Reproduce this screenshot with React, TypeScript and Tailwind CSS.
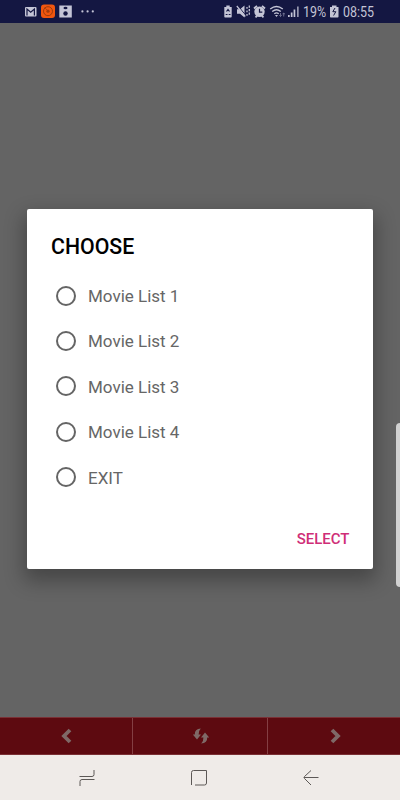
import React, { useState } from 'react';

const options = ['Movie List 1', 'Movie List 2', 'Movie List 3', 'Movie List 4', 'EXIT'];

const StatusBar = () => {
  return (
    <header className="relative h-[23px] shrink-0 bg-[#141742] text-[#c4c5d6]">
      <svg width="400" height="23" viewBox="0 0 400 23" fill="currentColor">
        {/* Mail */}
        <rect x="25" y="7" width="11.5" height="9.5" rx="1" />
        <path d="M27 15.5V9l3.700 3.200L34.400 9v6.500" fill="none" stroke="#141742" strokeWidth="1.2" />
        {/* App badge */}
        <rect x="41" y="4.5" width="14" height="13.5" rx="3" fill="#f0560f" />
        <circle cx="48" cy="11.2" r="4.5" fill="none" stroke="#9c3b0c" strokeWidth="1" />
        <circle cx="48" cy="11.2" r="1.6" fill="#a03c0d" />
        <path d="M44.5 7.5l2.500 2.500" stroke="#a03c0d" strokeWidth=".7" />
        {/* Saved */}
        <rect x="59.3" y="5.5" width="12.5" height="12" />
        <ellipse cx="65.5" cy="8" rx="2" ry="1.2" fill="#141742" />
        <circle cx="65.5" cy="13.5" r="2.2" fill="#141742" />
        {/* More */}
        <circle cx="82.4" cy="11.4" r="1.1" />
        <circle cx="87.6" cy="11.4" r="1.1" />
        <circle cx="92.8" cy="11.4" r="1.1" />
        {/* Battery saver */}
        <path d="M226.3 5.5h3.4V7h2v9.7q0 .8-.8.8h-5.8q-.8 0-.8-.8V7h2z" />
        <path d="M226.5 11.5l1.500-2 1.500 2M225.700 14.500h1.800M228.700 14.500h1.800" fill="none" stroke="#141742" strokeWidth="1.2" />
        {/* Sound off */}
        <path d="M237 9.3h3l4.500-3.800v12L240 13.700h-3z" />
        <path d="M237.8 5.5l8 10" stroke="#141742" strokeWidth="1" />
        <path d="M236.8 6l8.500 10.500" stroke="currentColor" strokeWidth="1.2" />
        <path d="M247 7v1.800M247 10.500v1.800M247 14v1.800M249.300 5.500v2.200M249.300 9v2.200M249.300 12.500v2.200" stroke="currentColor" strokeWidth="1.3" />
        {/* Alarm */}
        <circle cx="259.5" cy="11.8" r="5.2" />
        <path d="M254 8.5l3-2.7M265 8.5l-3-2.7M255.5 17.300l1.500-1.500M263.5 17.300l-1.500-1.500" stroke="currentColor" strokeWidth="1.8" />
        <path d="M259.5 8.8v3.3h2.8" fill="none" stroke="#141742" strokeWidth="1.2" />
        {/* Wifi */}
        <g fill="none" stroke="currentColor" strokeWidth="1.4">
          <path d="M270.2 9q6.300-5 12.600 0" />
          <path d="M272.2 11.5q4.300-3.600 8.600 0" />
          <path d="M274.3 13.8q2.200-1.8 4.400 0" />
        </g>
        <path d="M275 15h3l-1.5 2z" />
        <path d="M280.5 13v3.5m-1.3-1.3l1.3 1.3 1.3-1.3M283.7 16.5V13m-1.3 1.3l1.3-1.3 1.3 1.3" fill="none" stroke="#7c7e9c" strokeWidth=".8" />
        {/* Signal */}
        <path d="M288 15h1.700v2H288zM290.8 12.5h1.7V17h-1.7zM293.6 9.5h1.7V17h-1.7z" />
        <path d="M297 6.5h1.7V17H297z" fill="#9697ae" />
        {/* Battery */}
        <path d="M332 5.500h4.500V7h2v9.7q0 .8-.8.8h-6.900q-.8 0-.8-.8V7h2z" />
        <path d="M335 8l-2.200 3.700h3l-2.200 3.800" fill="none" stroke="#141742" strokeWidth="1" />
      </svg>
      <span className="absolute top-[4px] left-[303px] origin-left scale-x-[0.89] text-[14px] leading-4">19%</span>
      <span className="absolute top-[4px] left-[342.5px] origin-left scale-x-[0.89] text-[14px] leading-4">08:55</span>
    </header>
  );
};

const Toolbar = () => {
  return (
    <div className="grid h-[38px] shrink-0 grid-cols-[133px_135px_132px] border-y border-[#7a3035] bg-[#5d0a10] text-[#7f6967]">
      <button className="flex items-center justify-center border-r border-[#843f43]" aria-label="Previous">
        <svg width="12" height="16" viewBox="0 0 12 16" fill="none" stroke="currentColor" strokeWidth="3.8">
          <path d="M10 2L4 8l6 6" />
        </svg>
      </button>
      <button className="flex items-center justify-center border-r border-[#843f43] pl-[2px]" aria-label="Refresh">
        <svg width="18" height="18" viewBox="0 0 18 18" fill="currentColor">
          <path d="M8.800 1.500Q2.500 2 2.800 7.500H.8L5 12.500l4-5H6.600Q6.400 4 8.800 1.500z" />
          <path d="M9.200 16.500q6.300-.5 6-6h2L13 5.500l-4 5h2.400q.2 3.500-2.200 6z" />
        </svg>
      </button>
      <button className="flex items-center justify-center pl-[3px]" aria-label="Next">
        <svg width="12" height="16" viewBox="0 0 12 16" fill="none" stroke="currentColor" strokeWidth="3.8">
          <path d="M2 2l6 6-6 6" />
        </svg>
      </button>
    </div>
  );
};

const NavigationBar = () => {
  return (
    <nav className="flex h-[45px] shrink-0 items-center justify-center gap-24 bg-[#efebe8] pr-[2px] text-[#5c5856]">
      <svg width="16" height="18" viewBox="0 0 16 18" fill="none" stroke="currentColor">
        <path d="M.5 7.5h12.500q2 0 2-2V1M15.500 10.500H3q-2 0-2 2V17" />
      </svg>
      <svg width="16" height="16" viewBox="0 0 16 16" fill="none" stroke="currentColor">
        <path d="M.5 15V2.500q0-2 2-2H15.500V13q0 2-2 2H4" />
      </svg>
      <svg width="16" height="16" viewBox="0 0 16 16" fill="none" stroke="currentColor">
        <path d="M15.5 7.500H1M8 .5L1.500 6.500q-1 1 0 2L8 15" />
      </svg>
    </nav>
  );
};

const App = () => {
  const [selected, setSelected] = useState('');

  return (
    <div className="relative flex h-[800px] w-[400px] flex-col overflow-hidden bg-[#646464] font-[Roboto,sans-serif]">
      <StatusBar />

      <main className="flex-1 px-[27px] pt-[186px]">
        <div className="flex h-[359.5px] w-[346px] flex-col rounded-[2px] bg-white shadow-[0_9px_20px_3px_rgba(0,0,0,0.3)]">
          <h1 className="px-6 pt-[25px] text-[21.3px] leading-[26px] font-medium text-black">CHOOSE</h1>

          <div className="mt-[13px] flex flex-col">
            {options.map((option) => (
              <label key={option} className="flex h-[45.4px] items-center pl-[29px] text-[#666]">
                <input
                  type="radio"
                  name="list"
                  className="mr-3 size-5 appearance-none rounded-full border-2 border-[#656565] checked:border-[5px]"
                  checked={selected === option}
                  onChange={() => setSelected(option)}
                />
                <span className="pt-[2px] text-[17px]">{option}</span>
              </label>
            ))}
          </div>

          <button className="mt-auto mr-[23.5px] mb-5 self-end text-[15px] leading-5 font-medium text-[#cf2e77]">
            SELECT
          </button>
        </div>
      </main>

      <Toolbar />
      <NavigationBar />

      {/* Edge panel handle */}
      <div className="absolute top-[423px] right-0 h-[164px] w-[4px] rounded-l-[4px] bg-[#d2d2d2]" />
    </div>
  );
};

export default App;
